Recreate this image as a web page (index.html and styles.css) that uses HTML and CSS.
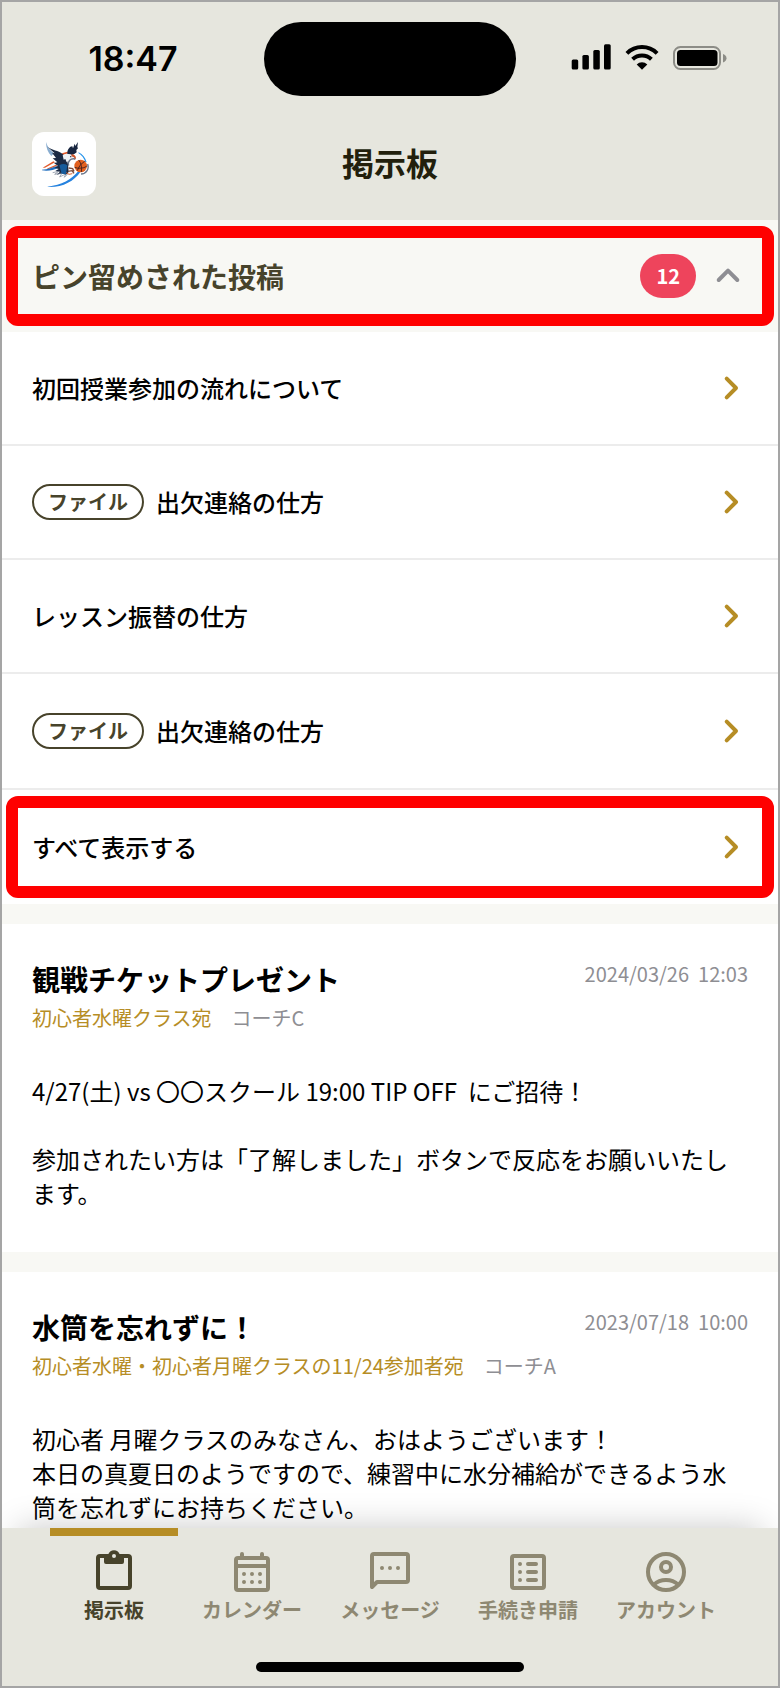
FILE: index.html
```html
<!DOCTYPE html>
<html lang="ja">
<head>
<meta charset="utf-8">
<meta name="viewport" content="width=device-width, initial-scale=1">
<title>掲示板</title>
<link rel="stylesheet" href="styles.css">
</head>
<body>
<svg class="sprite" aria-hidden="true">
  <symbol id="chevron-right" viewBox="0 0 48 48">
    <path d="M20.7 14.7 30 24l-9.3 9.3" fill="none" stroke="currentColor" stroke-width="4" stroke-linecap="round" stroke-linejoin="round"/>
  </symbol>
</svg>
<div class="app">
  <header class="header">
    <div class="status">
      <time class="status-time">18:47</time>
      <div class="island"></div>
      <div class="status-icons">
        <svg width="40" height="26" viewBox="0 0 40 26" aria-hidden="true">
          <rect x="0.7" y="15.5" width="6.5" height="10" rx="1.5"/>
          <rect x="11.4" y="11" width="6.5" height="14.5" rx="1.5"/>
          <rect x="22.3" y="6" width="6.5" height="19.5" rx="1.5"/>
          <rect x="33" y="0.2" width="6.7" height="25.3" rx="1.5"/>
        </svg>
        <svg width="34" height="26" viewBox="0 0 34 26" aria-hidden="true">
          <path d="M1.9 9.3a21.500 21.500 0 0 1 30.200 0M7.600 15.300a13.500 13.500 0 0 1 18.800 0" fill="none" stroke="#000" stroke-width="4"/>
          <path d="M17 25.800 11.700 20.500a7.600 7.600 0 0 1 10.600 0Z"/>
        </svg>
        <svg width="54" height="26" viewBox="0 0 54 26" aria-hidden="true">
          <rect x="1" y="3" width="46" height="22" rx="6.500" fill="none" stroke="#8c8c86" stroke-width="2"/>
          <rect x="4" y="6" width="40.500" height="16" rx="3.500"/>
          <path d="M50 10c2.300.8 3.500 2.300 3.500 4.200s-1.200 3.400-3.500 4.200Z" fill="#8c8c86"/>
        </svg>
      </div>
    </div>
    <div class="titlebar">
      <a class="logo" href="#" aria-label="チーム">
        <svg width="64" height="64" viewBox="36 36 192 192" aria-hidden="true">
          <path d="M78 66c4 14 12 26 24 34l-8 8C84 98 78 84 78 66Z" fill="#3b76b0" opacity=".6"/>
          <path d="M176 97c12 6 20 16 24 30l-4-1c-4-12-11-21-21-27Z" fill="#2492ea"/>
          <path d="M68 143 100 124l5 3-30 16ZM80 146l28-12 4 3-26 10ZM126 100l16-5 4 4-18 6Z" fill="#e35a2b"/>
          <path d="M66 149c18-1 32-7 46-11l5 5c-17 7-32 11-51 8Z" fill="#206fc0"/>
          <path d="M83 200c42-5 72-21 92-47l6 3c-19 28-54 47-98 45Z" fill="#2582df"/>
          <path d="M82 80c16 12 32 10 46 22l10 10 6 20 2 24-8 8-10-4-18 4 10-9-14-2 10-6-12-4 10-5-12-9 10-2-14-12 10-1-12-16 8 2Z" fill="#1b2a44"/>
          <path d="M142 102c-1-14 9-24 15-23l2 6 5-14 2 7 8-12-2 15 2 4-5 5 1 7-6 4-8 4Z" fill="#182640"/>
          <path d="M98 158l18-4-12 9 22-4-7 12 18-9-4 10 10-10" fill="none" stroke="#758094" stroke-width="2"/>
          <path d="M118 136c9-6 17-5 24 0l-4 27-13-2Z" fill="#175b9b"/>
          <path d="M128 106c10-6 25-6 32 2l3 8-10-1-3 15-7-9-3 6-4-10-5 2Z" fill="#eef1f5"/>
          <path d="M155 103c8 0 13 5 13 12l-4 5-2-8-8-3Z" fill="#ce552a"/>
          <circle cx="152" cy="110" r="2" fill="#1b2a44"/>
          <path d="M146 137c-4-14 6-23 20-20M203 132c5 15-4 30-20 30" fill="none" stroke="#69758a" stroke-width="4"/>
          <circle cx="182" cy="138" r="19" fill="#e2601f"/>
          <path d="M164 142c8 4 27 4 36-3M176 120c8 9 10 23 8 36M194 124c-10 6-18 16-22 28" fill="none" stroke="#391a1d" stroke-width="2.500"/>
          <path d="M146 144l12 2 4 8M144 154l12-2 6 8" fill="none" stroke="#7c4938" stroke-width="4"/>
          <path d="M139 158l8 5 10-2" fill="none" stroke="#da6733" stroke-width="3"/>
        </svg>
      </a>
      <h1 class="page-title">掲示板</h1>
    </div>
  </header>

  <main class="content">
    <section>
      <button class="pin-header outlined" type="button" aria-expanded="true">
        <span class="pin-title">ピン留めされた投稿</span>
        <span class="badge">12</span>
        <svg class="icon" viewBox="0 0 48 48" aria-hidden="true">
          <path d="M14.700 28 24 18.700 33.300 28" fill="none" stroke="currentColor" stroke-width="4" stroke-linecap="round" stroke-linejoin="round"/>
        </svg>
      </button>
      <ul class="pin-list">
        <li><a class="row" href="#"><span class="row-text">初回授業参加の流れについて</span><svg class="icon" aria-hidden="true"><use href="#chevron-right"/></svg></a></li>
        <li><a class="row" href="#"><span class="tag">ファイル</span><span class="row-text">出欠連絡の仕方</span><svg class="icon" aria-hidden="true"><use href="#chevron-right"/></svg></a></li>
        <li><a class="row" href="#"><span class="row-text">レッスン振替の仕方</span><svg class="icon" aria-hidden="true"><use href="#chevron-right"/></svg></a></li>
        <li><a class="row" href="#"><span class="tag">ファイル</span><span class="row-text">出欠連絡の仕方</span><svg class="icon" aria-hidden="true"><use href="#chevron-right"/></svg></a></li>
      </ul>
      <div class="show-all">
        <a class="row outlined" href="#"><span class="row-text">すべて表示する</span><svg class="icon" aria-hidden="true"><use href="#chevron-right"/></svg></a>
      </div>
    </section>

    <article class="post">
      <div class="post-head">
        <h2 class="post-title">観戦チケットプレゼント</h2>
        <time class="post-date">2024/03/26&nbsp; 12:03</time>
      </div>
      <div class="post-meta"><span class="post-to">初心者水曜クラス宛</span><span>コーチC</span></div>
      <p class="post-body">4/27(土) vs 〇〇スクール 19:00 TIP OFF&nbsp; にご招待！<br><br>参加されたい方は「了解しました」ボタンで反応をお願いいたします。</p>
    </article>

    <article class="post">
      <div class="post-head">
        <h2 class="post-title">水筒を忘れずに！</h2>
        <time class="post-date">2023/07/18&nbsp; 10:00</time>
      </div>
      <div class="post-meta"><span class="post-to">初心者水曜・初心者月曜クラスの11/24参加者宛</span><span>コーチA</span></div>
      <p class="post-body">初心者 月曜クラスのみなさん、おはようございます！<br>本日の真夏日のようですので、練習中に水分補給ができるよう水筒を忘れずにお持ちください。</p>
    </article>
  </main>

  <nav class="tabbar">
    <div class="tabs">
      <a class="tab tab-active" href="#" aria-current="page">
        <svg class="icon" viewBox="0 0 24 24" aria-hidden="true">
          <path d="M8 4H5a1 1 0 0 0-1 1v14a1 1 0 0 0 1 1h14a1 1 0 0 0 1-1V5a1 1 0 0 0-1-1h-3" fill="none" stroke="currentColor" stroke-width="2"/>
          <path fill="currentColor" fill-rule="evenodd" d="M7 3h2.200a3 3 0 0 1 5.600 0H17v4a1 1 0 0 1-1 1H8a1 1 0 0 1-1-1ZM12 3a1 1 0 1 0 0 2 1 1 0 0 0 0-2Z"/>
        </svg>
        <span>掲示板</span>
      </a>
      <a class="tab" href="#">
        <svg class="icon" viewBox="0 0 24 24" fill="none" stroke="currentColor" stroke-width="2" aria-hidden="true">
          <rect x="4" y="5" width="16" height="16" rx="1"/>
          <path d="M4 9h16"/>
          <path d="M7 3v2M17 3v2M8 13h0M12 13h0M16 13h0M8 17h0M12 17h0M16 17h0" stroke-linecap="round"/>
        </svg>
        <span>カレンダー</span>
      </a>
      <a class="tab" href="#">
        <svg class="icon" viewBox="0 0 24 24" fill="none" stroke="currentColor" stroke-width="2" stroke-linejoin="round" aria-hidden="true">
          <path d="M3 4a1 1 0 0 1 1-1h16a1 1 0 0 1 1 1v12a1 1 0 0 1-1 1H5.500L3 19.500Z"/>
          <path d="M8 10h0M12 10h0M16 10h0" stroke-linecap="round"/>
        </svg>
        <span>メッセージ</span>
      </a>
      <a class="tab" href="#">
        <svg class="icon" viewBox="0 0 24 24" fill="none" stroke="currentColor" stroke-width="2" aria-hidden="true">
          <rect x="4" y="4" width="16" height="16" rx="1"/>
          <path d="M8 8h0M8 12h0M8 16h0M12 8h4M12 12h4M12 16h4" stroke-linecap="round"/>
        </svg>
        <span>手続き申請</span>
      </a>
      <a class="tab" href="#">
        <svg class="icon" viewBox="0 0 24 24" fill="none" stroke="currentColor" stroke-width="2" aria-hidden="true">
          <circle cx="12" cy="12" r="9"/>
          <circle cx="12" cy="9.500" r="2.500"/>
          <path d="M5.900 18.300C7.500 16.800 9.600 16 12 16s4.500.8 6.100 2.300"/>
        </svg>
        <span>アカウント</span>
      </a>
    </div>
    <div class="home-indicator"></div>
  </nav>
</div>
</body>
</html>
```
FILE: styles.css
```css
:root {
  --chrome: #e6e6de;
  --subtle: #f8f8f4;
  --olive: #47432b;
  --gold: #b68d25;
  --gray: #8e8e93;
}

* {
  box-sizing: border-box;
}

body,
h1,
h2,
p,
ul {
  margin: 0;
}

body {
  font-family: "Noto Sans CJK JP", sans-serif;
  font-size: 24px;
  color: #000;
}

a {
  color: inherit;
  text-decoration: none;
}

.sprite {
  position: absolute;
  width: 0;
  height: 0;
}

.app {
  display: flex;
  flex-direction: column;
  height: 100vh;
  border: 2px solid #a5a5a5;
  background: var(--subtle);
  overflow: hidden;
}

.icon {
  flex: none;
  width: 48px;
  height: 48px;
}

/* Header */
.header {
  flex: none;
  background: var(--chrome);
}

.status {
  display: grid;
  grid-template-columns: 1fr 252px 1fr;
  align-items: center;
  justify-items: center;
  padding: 20px 0;
}

.status-time {
  font-family: Inter, sans-serif;
  font-size: 34px;
  font-weight: 600;
  line-height: 40px;
}

.island {
  width: 100%;
  height: 74px;
  border-radius: 37px;
  background: #000;
}

.status-icons {
  display: flex;
  gap: 14px;
  padding: 0 0 4px 4px;
}

.titlebar {
  display: grid;
  grid-template-columns: 1fr auto 1fr;
  align-items: center;
  padding: 16px 30px 24px;
}

.logo {
  display: flex;
  width: 64px;
  border-radius: 12px;
  background: #fff;
}

.page-title {
  padding-bottom: 4px;
  font-size: 32px;
  line-height: 48px;
  color: #221f0c;
}

/* Pinned posts */
.outlined {
  position: relative;
}

.outlined::after {
  content: "";
  position: absolute;
  inset: 6px 4px;
  border: 12px solid #f00;
  border-radius: 12px;
  pointer-events: none;
}

.pin-header {
  display: flex;
  align-items: center;
  gap: 8px;
  width: 100%;
  min-height: 112px;
  padding: 0 26px 0 30px;
  border: 0;
  background: var(--subtle);
  color: var(--gray);
  font: inherit;
  text-align: left;
}

.pin-title {
  flex: 1;
  font-size: 28px;
  font-weight: 700;
  line-height: 40px;
  color: var(--olive);
}

.badge {
  padding: 0 16px;
  border-radius: 22px;
  background: #ee445c;
  color: #fff;
  font-size: 20px;
  font-weight: 700;
  line-height: 44px;
}

.pin-list {
  padding: 0;
  list-style: none;
}

.pin-list li + li,
.show-all {
  border-top: 2px solid #ececec;
}

.row {
  display: flex;
  align-items: center;
  gap: 12px;
  min-height: 112px;
  padding: 0 24px 0 30px;
  background: #fff;
  color: var(--gold);
}

.pin-list li:last-child .row,
.show-all .row {
  min-height: 114px;
}

.row-text {
  flex: 1;
  font-weight: 500;
  line-height: 36px;
  color: #000;
}

.tag {
  padding: 0 14px;
  border: 2px solid var(--olive);
  border-radius: 18px;
  color: var(--olive);
  font-size: 20px;
  font-weight: 700;
  line-height: 32px;
}

/* Posts */
.content {
  flex: 1;
  min-height: 0;
  overflow-y: auto;
  scrollbar-width: none;
}

.post {
  margin-top: 20px;
  padding: 36px 30px 42px;
  background: #fff;
}

.post-head {
  display: flex;
  align-items: flex-start;
  justify-content: space-between;
  gap: 20px;
}

.post-title {
  font-size: 28px;
  line-height: 38px;
}

.post-date {
  flex: none;
  color: var(--gray);
  font-size: 20px;
  line-height: 28px;
}

.post-meta {
  display: flex;
  gap: 20px;
  color: var(--gray);
  font-size: 20px;
  line-height: 40px;
}

.post-to {
  color: var(--gold);
}

.post-body {
  margin-top: 36px;
  line-height: 34px;
}

/* Tab bar */
.tabbar {
  position: relative;
  flex: none;
  padding-bottom: 14px;
  background: var(--chrome);
  box-shadow: 0 -16px 32px -16px rgba(0, 0, 0, 0.22);
}

.tabs {
  display: flex;
  gap: 10px;
  padding: 0 48px;
}

.tab {
  display: flex;
  flex: 1;
  flex-direction: column;
  align-items: center;
  padding-top: 12px;
  border-top: 8px solid transparent;
  color: #8e8872;
  font-size: 20px;
  font-weight: 700;
  line-height: 28px;
  white-space: nowrap;
}

.tab-active {
  border-color: var(--gold);
  color: var(--olive);
}

.home-indicator {
  width: 268px;
  height: 10px;
  margin: 38px auto 0;
  border-radius: 5px;
  background: #000;
}
```
